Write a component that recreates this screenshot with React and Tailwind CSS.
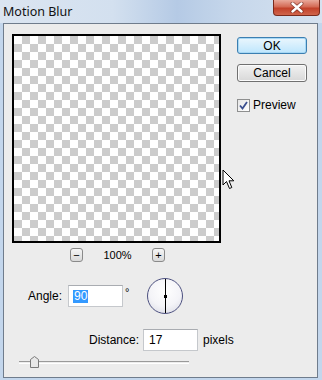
import React from 'react'

const Cursor = () => (
    <svg width="14" height="21" viewBox="0 0 14 21" className="absolute left-[222px] top-[169px]">
        <path d="M1 1 L1 16 L4.5 12.5 L7.5 19.5 L9.8 18.5 L7 11.8 L11.8 11.8 Z" fill="#fff" stroke="#000" strokeWidth="1" strokeLinejoin="round" />
    </svg>
)

const SmallBtn = ({ label }) => (
    <button className="w-[13px] h-[14px] rounded-[3px] border border-[#8a8a8a] bg-gradient-to-b from-[#f6f6f6] to-[#d9d9d9] flex items-center justify-center text-[11px] leading-none text-black">
        {label}
    </button>
)

const AngleDial = () => (
    <div className="w-[36px] h-[36px] rounded-full border-[1.5px] border-[#4d5180] bg-[radial-gradient(circle_at_50%_35%,#ffffff_0%,#f4f4f8_55%,#d6d7e2_100%)] relative flex items-center justify-center">
        <div className="w-[1px] h-full bg-black"></div>
        <div className="absolute w-[3px] h-[3px] bg-black"></div>
    </div>
)

const App = () => {
    return (
        <div className="w-[322px] h-[380px] relative overflow-hidden flex flex-col bg-[#c3d6ec] font-['Liberation_Sans',Arial,sans-serif] text-[12px] text-black">

            {/* title bar */}
            <div className="h-[23px] flex justify-between bg-[linear-gradient(90deg,#dbe5f1_0%,#d3e0ef_35%,#b5cae5_55%,#c6d7eb_72%,#d6e2f0_100%)]">
                <span className="pl-[3px] pt-[3px] text-[12.5px] font-['Noto_Sans',sans-serif] text-[#111]">Motion Blur</span>
                <div className="w-[47px] h-[16px] mr-[2px] rounded-b-[4px] border border-t-0 border-[#7a2a1c] bg-[linear-gradient(180deg,#e9a99b_0%,#d46a55_45%,#c2412a_55%,#d0654c_100%)] flex items-center justify-center">
                    <svg width="14" height="11" viewBox="0 0 14 11">
                        <path d="M2.5 1.5 L11.5 9.5 M11.5 1.5 L2.5 9.5" stroke="#5a1a10" strokeWidth="4" strokeLinecap="round" opacity="0.6" />
                        <path d="M2.5 1.5 L11.5 9.5 M11.5 1.5 L2.5 9.5" stroke="#fff" strokeWidth="2.4" strokeLinecap="round" />
                    </svg>
                </div>
            </div>

            {/* client */}
            <div className="flex-1 ml-[3px] mr-[4px] mb-[2px] border border-[#6f7c8c] bg-[#ececec] flex">

                <div className="w-[233px] pl-[8px] pt-[10px] flex flex-col">
                    <div className="w-[209px] h-[209px] border-2 border-black bg-[conic-gradient(#cccccc_25%,#ffffff_0_50%,#cccccc_0_75%,#ffffff_0)] bg-[length:16px_16px]"></div>

                    <div className="mt-[5px] h-[14px] pl-[58px] flex items-center">
                        <SmallBtn label="−" />
                        <span className="w-[69px] text-center text-[11px]">100%</span>
                        <SmallBtn label="+" />
                    </div>

                    <div className="mt-[16px] h-[36px] pl-[16px] flex items-center">
                        <span className="w-[40px]">Angle:</span>
                        <div className="w-[55px] h-[22px] bg-white border border-[#c5c8cc] border-t-[#a9acb1] pl-[4px] flex items-center">
                            <span className="bg-[#3399ff] text-white px-[1px] leading-[13px]">90</span>
                        </div>
                        <span className="w-[24px] pl-[2px] self-start mt-[6px] text-[11px]">°</span>
                        <AngleDial />
                    </div>

                    <div className="mt-[15px] h-[22px] pl-[77px] flex items-center">
                        <span className="w-[54px]">Distance:</span>
                        <div className="w-[55px] h-[22px] bg-white border border-[#c5c8cc] border-t-[#a9acb1] pl-[5px] flex items-center">17</div>
                        <span className="ml-[5px]">pixels</span>
                    </div>

                    <div className="mt-[5px] h-[12px] ml-[7px] w-[170px] relative flex items-center">
                        <div className="w-full h-[3px] border-t border-[#9a9a9a] border-b border-b-white"></div>
                        <svg width="9" height="12" viewBox="0 0 9 12" className="absolute left-[11px] top-0">
                            <path d="M0.5 3.5 L4.5 0.5 L8.5 3.5 L8.5 11.5 L0.5 11.5 Z" fill="#e8e8e8" stroke="#7a7a7a" strokeWidth="1" />
                        </svg>
                    </div>
                </div>

                <div className="pt-[13px] flex flex-col">
                    <button className="w-[70px] h-[17px] rounded-[3px] border border-[#3c7fb1] bg-gradient-to-b from-[#eaf6fd] to-[#bee6fd] shadow-[inset_0_0_0_1px_#a7d8f5] flex items-center justify-center text-[12px]">OK</button>
                    <button className="mt-[10px] w-[70px] h-[18px] rounded-[3px] border border-[#707070] bg-gradient-to-b from-[#f2f2f2] to-[#d8d8d8] shadow-[inset_0_0_0_1px_#fbfbfb] flex items-center justify-center text-[12px]">Cancel</button>
                    <label className="mt-[14px] flex items-center gap-[3px]">
                        <span className="w-[13px] h-[13px] border border-[#8e8f8f] bg-gradient-to-br from-[#e6e6e6] to-white flex items-center justify-center">
                            <svg width="9" height="9" viewBox="0 0 9 9">
                                <path d="M1 4.5 L3.5 7.5 L8 1" fill="none" stroke="#3b4f8f" strokeWidth="1.8" />
                            </svg>
                        </span>
                        <span>Preview</span>
                    </label>
                </div>
            </div>

            <Cursor />
        </div>
    )
}

export default App
